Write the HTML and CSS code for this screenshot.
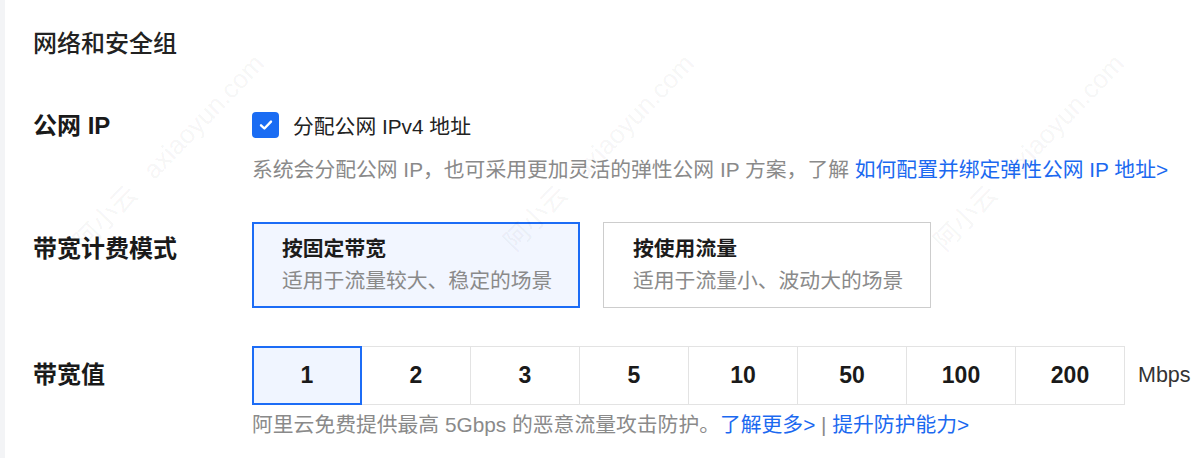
FILE: index.html
```html
<!DOCTYPE html>
<html lang="zh-CN">
<head>
<meta charset="utf-8">
<title>网络和安全组</title>
<link rel="stylesheet" href="styles.css">
</head>
<body>
<div class="page">
  <div class="rail"></div>
  <main class="content">
    <h2 class="title">网络和安全组</h2>

    <section class="row row-ip">
      <div class="label label-ip">公网 IP</div>
      <div class="field">
        <label class="check-line">
          <span class="checkbox">
            <svg width="16" height="16" viewBox="0 0 16 16"><path d="M3 8.3 L6.4 11.5 L13 4.6" fill="none" stroke="#fff" stroke-width="2.4" stroke-linecap="round" stroke-linejoin="round"/></svg>
          </span>
          <span class="check-text">分配公网 IPv4 地址</span>
        </label>
        <p class="help help-ip">系统会分配公网 IP，也可采用更加灵活的弹性公网 IP 方案，了解 <a class="link">如何配置并绑定弹性公网 IP 地址&gt;</a></p>
      </div>
    </section>

    <section class="row row-mode">
      <div class="label label-mode">带宽计费模式</div>
      <div class="field cards">
        <div class="card card-active">
          <div class="card-title">按固定带宽</div>
          <div class="card-desc">适用于流量较大、稳定的场景</div>
        </div>
        <div class="card">
          <div class="card-title">按使用流量</div>
          <div class="card-desc">适用于流量小、波动大的场景</div>
        </div>
      </div>
    </section>

    <section class="row row-bw">
      <div class="label label-bw">带宽值</div>
      <div class="field">
        <div class="seg-line">
          <div class="segs">
            <div class="seg seg-active">1</div>
            <div class="seg">2</div>
            <div class="seg">3</div>
            <div class="seg">5</div>
            <div class="seg">10</div>
            <div class="seg">50</div>
            <div class="seg">100</div>
            <div class="seg">200</div>
          </div>
          <span class="unit">Mbps</span>
        </div>
        <p class="help help-bw">阿里云免费提供最高 5Gbps 的恶意流量攻击防护。<a class="link">了解更多&gt;</a> | <a class="link">提升防护能力&gt;</a></p>
      </div>
    </section>
  </main>
</div>
<div class="watermark" aria-hidden="true">
  <span class="wm wm1">阿小云&nbsp;&nbsp;&nbsp;axiaoyun.com</span>
  <span class="wm wm2">阿小云&nbsp;&nbsp;&nbsp;axiaoyun.com</span>
  <span class="wm wm3">阿小云&nbsp;&nbsp;&nbsp;axiaoyun.com</span>
</div>
</body>
</html>
```

FILE: styles.css
```css
html, body {
  margin: 0;
  padding: 0;
  background: #ffffff;
}

body {
  width: 1200px;
  height: 458px;
  overflow: hidden;
  position: relative;
  font-family: "Liberation Sans", "Noto Sans CJK SC", sans-serif;
  color: #1d1d1d;
}

.page {
  display: flex;
  height: 458px;
}

.rail {
  width: 5px;
  flex: none;
  background: #f3f4f6;
}

.content {
  flex: 1;
  padding-left: 28px;
}

.title {
  margin: 0;
  padding-top: 28px;
  font-size: 24px;
  line-height: 32px;
  font-weight: 500;
  color: #222;
}

.row {
  display: grid;
  grid-template-columns: 219px 1fr;
}

.label {
  font-size: 24px;
  line-height: 32px;
  font-weight: 700;
  color: #1a1a1a;
}

.row-ip {
  margin-top: 49px;
}

.label-ip {
  padding-top: 1px;
}

.check-line {
  display: flex;
  align-items: center;
  height: 32px;
}

.checkbox {
  width: 27px;
  height: 26px;
  border-radius: 4px;
  background: #1a6cf3;
  display: flex;
  align-items: center;
  justify-content: center;
  flex: none;
}

.check-text {
  margin-left: 14px;
  font-size: 20.8px;
  color: #222;
}

.help {
  margin: 0;
  font-size: 20.8px;
  line-height: 30px;
  color: #8a8a8a;
}

.help-ip {
  margin-top: 14px;
}

.link {
  color: #1b69f0;
  text-decoration: none;
}

.row-mode {
  margin-top: 37px;
}

.label-mode {
  padding-top: 11px;
}

.cards {
  display: flex;
  gap: 23px;
}

.card {
  width: 328px;
  height: 86px;
  box-sizing: border-box;
  border: 1px solid #cdcdcd;
  padding: 12px 0 0 29px;
  background: #fff;
}

.card-active {
  border: 2px solid #1c6cf6;
  background: #f2f6ff;
  padding: 11px 0 0 28px;
}

.card-title {
  font-size: 20.8px;
  line-height: 28px;
  font-weight: 700;
  color: #1c1c1c;
}

.card-desc {
  margin-top: 4px;
  font-size: 20.8px;
  line-height: 28px;
  color: #8a8a8a;
}

.row-bw {
  margin-top: 38px;
}

.label-bw {
  padding-top: 13px;
}

.seg-line {
  display: flex;
  align-items: center;
}

.segs {
  display: flex;
}

.seg {
  width: 110px;
  height: 59px;
  box-sizing: border-box;
  border: 1px solid #e3e3e3;
  margin-left: -1px;
  display: flex;
  align-items: center;
  justify-content: center;
  font-size: 23px;
  font-weight: 700;
  color: #1a1a1a;
  background: #fff;
}

.seg:first-child {
  margin-left: 0;
}

.seg-active {
  border: 2px solid #1c6cf6;
  background: #f0f5ff;
  position: relative;
  z-index: 1;
}

.unit {
  margin-left: 13px;
  font-size: 21.5px;
  color: #333;
}

.help-bw {
  margin-top: 5px;
}

.watermark {
  position: absolute;
  inset: 0;
  pointer-events: none;
  overflow: hidden;
}

.wm {
  position: absolute;
  white-space: nowrap;
  font-size: 26px;
  color: rgba(0, 0, 0, 0.055);
  transform: rotate(-46deg);
  transform-origin: 0 100%;
}

.wm1 { left: 90px; top: 220px; }
.wm2 { left: 520px; top: 220px; }
.wm3 { left: 950px; top: 220px; }
```
